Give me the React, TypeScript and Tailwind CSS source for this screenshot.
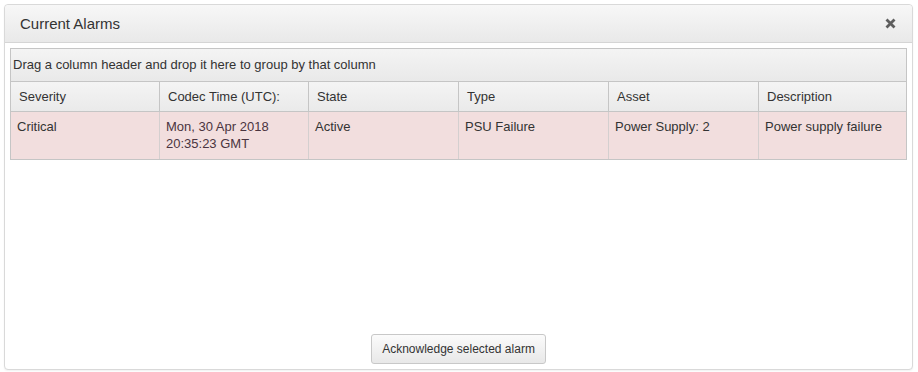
const columns = ["Severity", "Codec Time (UTC):", "State", "Type", "Asset", "Description"];

const alarms = [
  {
    severity: "Critical",
    time: ["Mon, 30 Apr 2018", "20:35:23 GMT"],
    state: "Active",
    type: "PSU Failure",
    asset: "Power Supply: 2",
    description: "Power supply failure",
  },
];

function CloseIcon() {
  return (
    <svg width="11" height="11" viewBox="0 0 11 11" className="block">
      <path d="M1.5 1.5 L9.5 9.5 M9.5 1.5 L1.5 9.5" stroke="#5e5e5e" strokeWidth="2.8" strokeLinecap="butt" />
    </svg>
  );
}

export default function App() {
  return (
    <div className="h-[372px] w-[918px] bg-white pl-[4px] pt-[4px] font-['Liberation_Sans',Arial,sans-serif] text-[#333]">
      <div className="flex h-[366px] w-[909px] flex-col rounded-[4px] border border-[#d9d9d9] bg-white shadow-[0_1px_2px_rgba(0,0,0,0.06)]">
        {/* title bar */}
        <div className="flex h-[38px] shrink-0 items-center justify-between rounded-t-[4px] border-b border-[#d5d5d5] bg-gradient-to-b from-[#f7f7f7] to-[#e9e9e9] pl-[15px] pr-[15px]">
          <span className="text-[15px] leading-none text-[#333]">Current Alarms</span>
          <button className="flex h-[14px] w-[14px] items-center justify-center">
            <CloseIcon />
          </button>
        </div>

        <div className="flex flex-1 flex-col px-[5px] pt-[5px] pb-[5px]">
          {/* grid */}
          <div className="border border-[#c5c5c5] text-[13px]">
            <div className="flex h-[33px] items-center border-b border-[#c5c5c5] bg-gradient-to-b from-[#f4f4f4] to-[#e9e9e9] pl-[2px]">
              Drag a column header and drop it here to group by that column
            </div>
            <div className="grid h-[30px] grid-cols-[148px_149px_150px_150px_150px_1fr] border-b border-[#c5c5c5] bg-gradient-to-b from-[#f4f4f4] to-[#eaeaea]">
              {columns.map((c, i) => (
                <div
                  key={c}
                  className={`flex items-center pl-[8px] ${i > 0 ? "border-l border-[#c5c5c5]" : ""}`}
                >
                  {c}
                </div>
              ))}
            </div>
            {alarms.map((a) => (
              <div
                key={a.type}
                className="grid h-[47px] grid-cols-[148px_149px_150px_150px_150px_1fr] bg-[#f2dede] leading-[17px]"
              >
                <div className="pl-[6px] pt-[6px]">{a.severity}</div>
                <div className="border-l border-[#d4cfcf] pl-[6px] pt-[6px] text-[#4a3440]">
                  <div>{a.time[0]}</div>
                  <div>{a.time[1]}</div>
                </div>
                <div className="border-l border-[#d4cfcf] pl-[6px] pt-[6px]">{a.state}</div>
                <div className="border-l border-[#d4cfcf] pl-[6px] pt-[6px]">{a.type}</div>
                <div className="border-l border-[#d4cfcf] pl-[6px] pt-[6px]">{a.asset}</div>
                <div className="border-l border-[#d4cfcf] pl-[6px] pt-[6px]">{a.description}</div>
              </div>
            ))}
          </div>

          <div className="mt-auto flex justify-center">
            <button className="h-[30px] w-[175px] rounded-[3px] border border-[#c8c8c8] bg-gradient-to-b from-[#fbfbfb] to-[#e8e8e8] text-[12px] text-[#333]">
              Acknowledge selected alarm
            </button>
          </div>
        </div>
      </div>
    </div>
  );
}
